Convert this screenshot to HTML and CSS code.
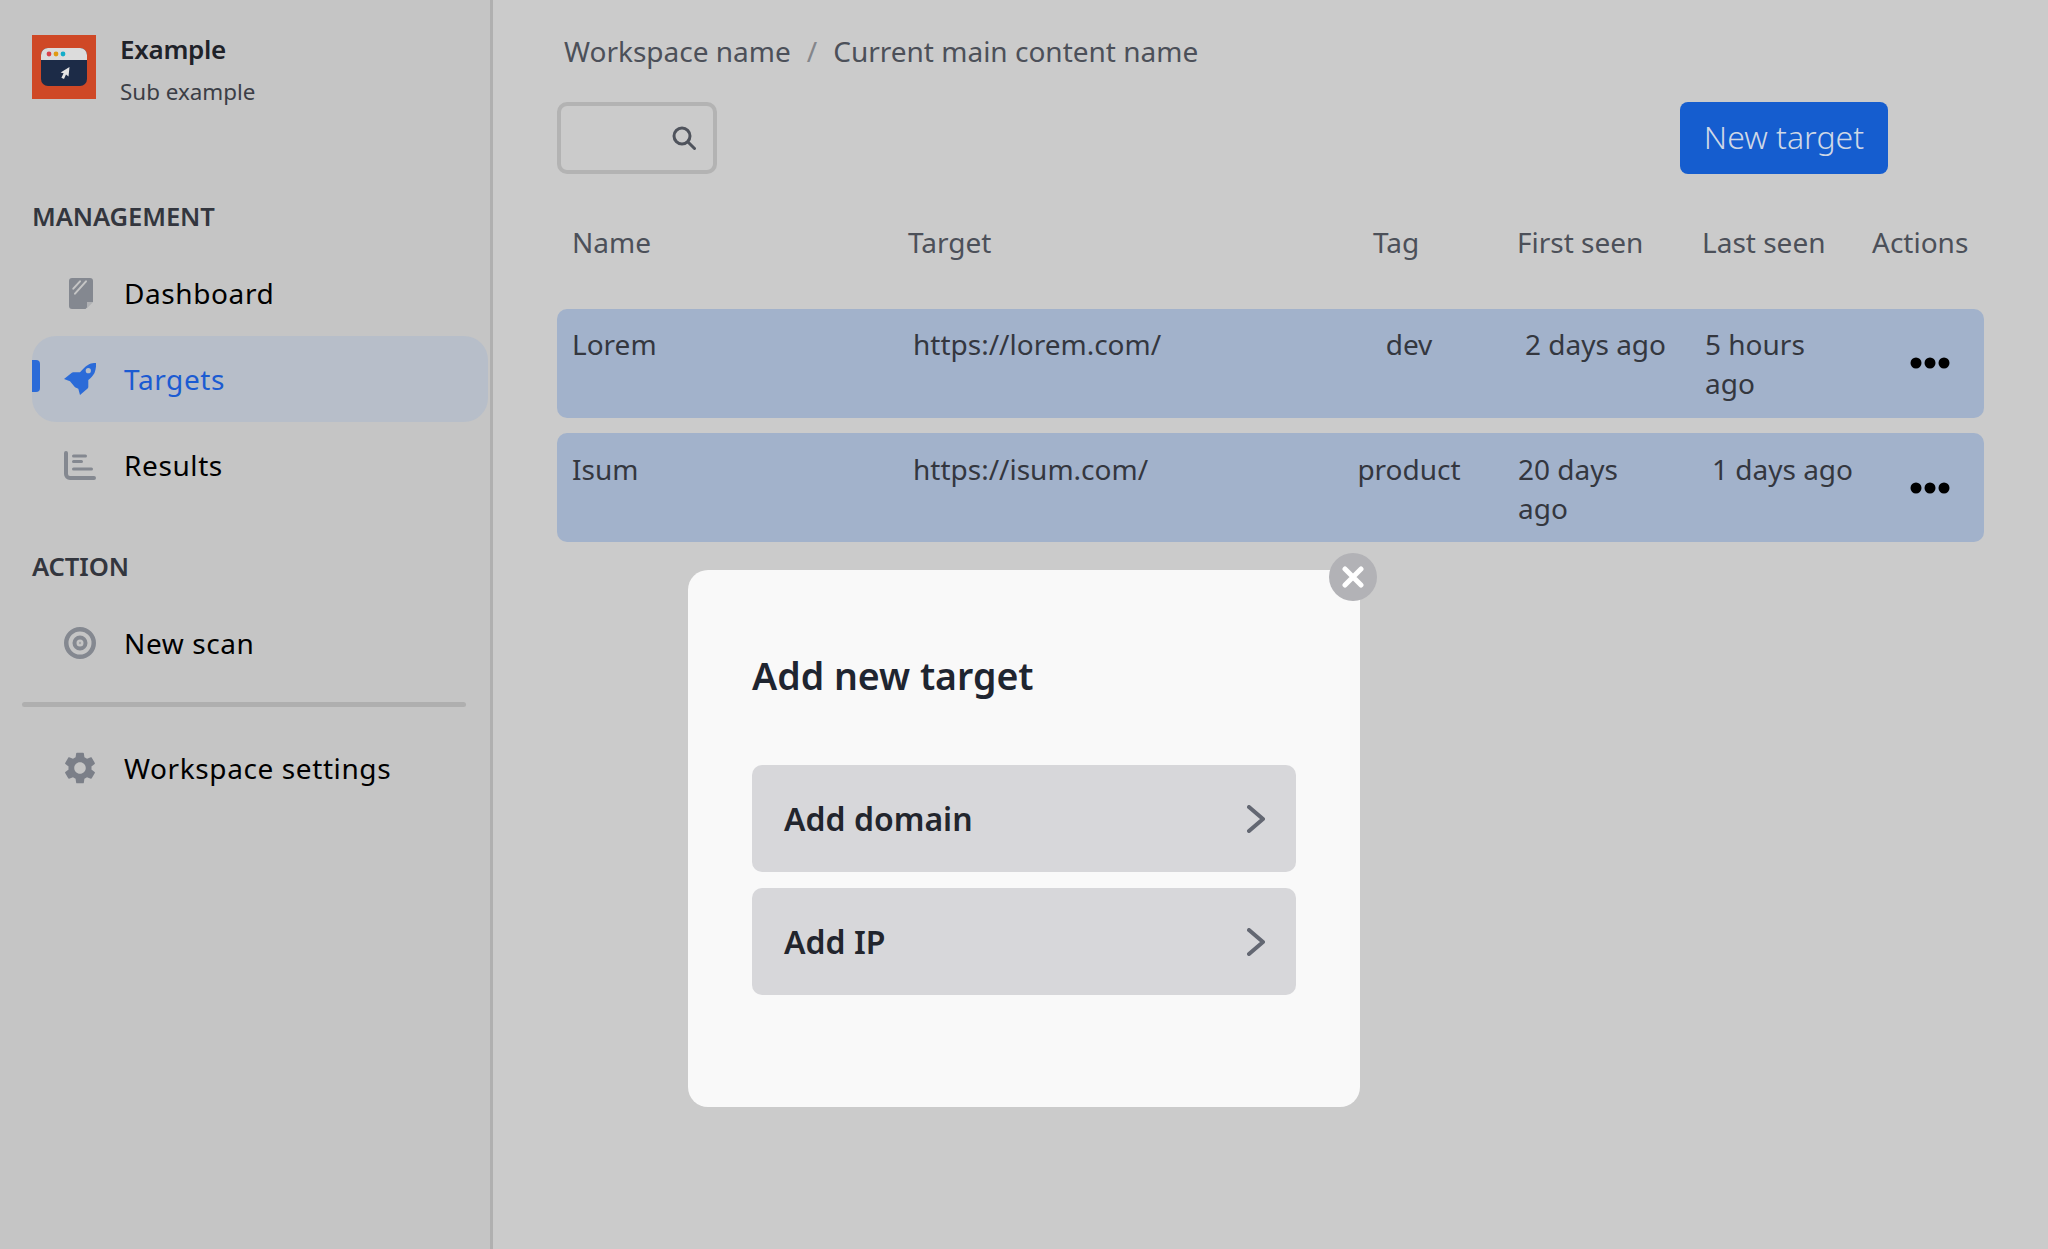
FILE: index.html

```html
<!DOCTYPE html>
<html>
<head>
  <title>Targets</title>
  <link rel="stylesheet" href="styles.css">
</head>
<body>

<div class="app">
  <div class="sidebar">
    <div class="brand">
      <svg class="logo" viewBox="0 0 64 64">
        <rect width="64" height="64" fill="#cf4826"/>
        <rect x="9" y="13" width="46" height="38" rx="7" fill="#1c2b47"/>
        <path d="M9 25v-5a7 7 0 0 1 7-7h32a7 7 0 0 1 7 7v5z" fill="#dcdcdc"/>
        <circle cx="17" cy="19" r="2.400" fill="#d8414a"/>
        <circle cx="24" cy="19" r="2.400" fill="#e09a13"/>
        <circle cx="31" cy="19" r="2.400" fill="#13adc9"/>
        <path d="M37.500 32l-1 9.500-2.500-2-2 4.500-2.600-1.300 2.200-4.400-3-.8z" fill="#e4e4e4"/>
      </svg>
      <div>
        <div class="brand-name">Example</div>
        <div class="brand-sub">Sub example</div>
      </div>
    </div>

    <div class="section-title first">MANAGEMENT</div>
    <div class="nav-item">
      <svg class="nav-icon" viewBox="0 0 32 32">
        <path d="M8 1h18a3 3 0 0 1 3 3v20.500L21.500 32H8a3 3 0 0 1-3-3V4a3 3 0 0 1 3-3z" fill="#848890"/>
        <path d="M23 31v-6h6z" fill="#b0b1b4"/>
        <path d="M9.300 11.700L16 4.300M11 16.700L22 4.300" stroke="#c5c5c5" stroke-width="2" stroke-linecap="round"/>
      </svg>
      <span>Dashboard</span>
    </div>
    <div class="nav-item active">
      <svg class="nav-icon" viewBox="0 0 32 32">
        <path d="M32 0c.3 3.500-.3 7-1.500 10-1.300 2.500-3.700 5-6.200 7v7c0 .8-.4 1.300-1 1.800L16 32l-1.700-6.300-3.300-1.400-5-6L0 16l7.500-6c.5-.4 1-.7 1.800-.7H16c2.500-2.800 5-5.800 8.300-7.600C26.500.5 29-.2 32 0z" fill="#2b6bd8"/>
        <circle cx="24.300" cy="7.700" r="2.600" fill="#b7bec9"/>
      </svg>
      <span>Targets</span>
    </div>
    <div class="nav-item">
      <svg class="nav-icon" viewBox="0 0 32 32">
        <path d="M2 4v21a4 4 0 0 0 4 4h24" fill="none" stroke="#848890" stroke-width="4" stroke-linecap="round"/>
        <path d="M9.500 7h12M9.500 12.500h8M9.500 20h18" fill="none" stroke="#848890" stroke-width="3" stroke-linecap="round"/>
      </svg>
      <span>Results</span>
    </div>

    <div class="section-title">ACTION</div>
    <div class="nav-item">
      <svg class="nav-icon" viewBox="0 0 32 32" fill="none" stroke="#848890">
        <circle cx="16" cy="16" r="13.750" stroke-width="4.500"/>
        <circle cx="16" cy="16" r="5.500" stroke-width="4"/>
        <circle cx="16" cy="16" r="1.200" fill="#a2a4a8" stroke="none"/>
      </svg>
      <span>New scan</span>
    </div>

    <div class="divider"></div>

    <div class="nav-item settings">
      <svg class="nav-icon" viewBox="2 2 20 20">
        <path fill="#7b7f88" d="M19.140 12.940c.04-.3.06-.61.06-.94 0-.32-.02-.64-.07-.94l2.030-1.580c.18-.14.23-.41.12-.61l-1.920-3.320c-.12-.22-.37-.29-.59-.22l-2.390.96c-.5-.38-1.030-.7-1.620-.94l-.36-2.540c-.04-.24-.24-.41-.48-.41h-3.840c-.24 0-.43.17-.47.41l-.36 2.540c-.59.24-1.130.57-1.620.94l-2.390-.96c-.22-.08-.47 0-.59.22L2.740 8.870c-.12.21-.08.47.12.61l2.030 1.580c-.05.3-.09.63-.09.94s.02.64.07.94l-2.030 1.580c-.18.14-.23.41-.12.61l1.920 3.320c.12.22.37.29.59.22l2.390-.96c.5.38 1.030.7 1.620.94l.36 2.540c.05.24.24.41.48.41h3.840c.24 0 .44-.17.47-.41l.36-2.540c.59-.24 1.130-.56 1.620-.94l2.390.96c.22.08.47 0 .59-.22l1.920-3.320c.12-.22.07-.47-.12-.61l-2.010-1.580zM12 15.600c-1.980 0-3.600-1.620-3.600-3.600s1.620-3.600 3.600-3.600 3.600 1.620 3.600 3.600-1.620 3.600-3.600 3.600z"/>
      </svg>
      <span>Workspace settings</span>
    </div>
  </div>

  <div class="main">
    <div class="breadcrumb">
      <span>Workspace name</span>
      <span class="sep">/</span>
      <span>Current main content name</span>
    </div>

    <div class="toolbar">
      <div class="search">
        <svg viewBox="0 0 24 24" fill="none" stroke="#4f535c" stroke-width="3">
          <circle cx="10" cy="10" r="8"/>
          <path d="M16 16l6.500 6.500" stroke-linecap="round"/>
        </svg>
      </div>
      <button class="btn-new">New target</button>
    </div>

    <div class="table-head">
      <div>Name</div>
      <div>Target</div>
      <div>Tag</div>
      <div>First seen</div>
      <div>Last seen</div>
      <div>Actions</div>
    </div>

    <div class="table-row">
      <div>Lorem</div>
      <div>https://lorem.com/</div>
      <div class="cell-center">dev</div>
      <div class="cell-first"><span>2 days ago</span></div>
      <div class="cell-last"><span>5 hours ago</span></div>
      <svg class="dots" viewBox="0 0 40 12"><circle cx="6" cy="6" r="5.500"/><circle cx="20" cy="6" r="5.500"/><circle cx="34" cy="6" r="5.500"/></svg>
    </div>
    <div class="table-row">
      <div>Isum</div>
      <div>https://isum.com/</div>
      <div class="cell-center">product</div>
      <div class="cell-first"><span>20 days ago</span></div>
      <div class="cell-last"><span>1 days ago</span></div>
      <svg class="dots" viewBox="0 0 40 12"><circle cx="6" cy="6" r="5.500"/><circle cx="20" cy="6" r="5.500"/><circle cx="34" cy="6" r="5.500"/></svg>
    </div>
  </div>
</div>

<div class="modal">
  <div class="modal-close">
    <svg viewBox="0 0 22 22"><path d="M3 3l16 16M19 3L3 19" stroke="#fff" stroke-width="5" stroke-linecap="round"/></svg>
  </div>
  <h2>Add new target</h2>
  <div class="option">
    <span>Add domain</span>
    <svg viewBox="0 0 18 28" fill="none" stroke="#636772" stroke-width="4" stroke-linecap="round" stroke-linejoin="round"><path d="M2 2l14 12L2 26"/></svg>
  </div>
  <div class="option">
    <span>Add IP</span>
    <svg viewBox="0 0 18 28" fill="none" stroke="#636772" stroke-width="4" stroke-linecap="round" stroke-linejoin="round"><path d="M2 2l14 12L2 26"/></svg>
  </div>
</div>

</body>
</html>
```

FILE: styles.css

```css
* { box-sizing: border-box; }
body { margin: 0; height: 1249px; overflow: hidden; font-family: "Noto Sans", sans-serif; background: #cbcbcb; }

.app { display: flex; height: 1249px; }

.sidebar { width: 493px; flex: none; padding-top: 34px; background: #c5c5c5; border-right: 3px solid #b0b0b0; }
.brand { display: flex; gap: 24px; margin-left: 32px; }
.logo { width: 64px; height: 64px; flex: none; margin-top: 1px; }
.brand-name { font-size: 26px; line-height: 30px; font-weight: 600; letter-spacing: -.3px; color: #1f2229; }
.brand-sub { margin-top: 13px; font-size: 22.4px; line-height: 30px; color: #3b3e46; }

.section-title { margin: 41px 0 15px 32px; font-size: 25.6px; line-height: 36px; font-weight: 600; letter-spacing: -.1px; color: #33363e; }
.section-title.first { margin-top: 92px; }

.nav-item { position: relative; display: flex; align-items: center; gap: 28px; height: 86px; width: 456px; margin-left: 32px; padding-left: 32px; font-size: 28px; letter-spacing: .6px; color: #000; }
.nav-icon { width: 32px; height: 32px; flex: none; }
.nav-item.active { background: #b7bec9; border-radius: 24px; color: #1b5bd2; }
.nav-item.active::before { content: ""; position: absolute; left: 0; top: 24px; width: 8px; height: 32px; background: #2b6bd8; border-radius: 0 4px 4px 0; }
.nav-item.settings { margin-top: 18px; }

.divider { height: 5px; width: 444px; margin: 16px 0 0 22px; background: #afafaf; border-radius: 3px; }

.main { flex: 1; padding: 29px 64px 0 64px; min-width: 0; }
.breadcrumb { display: flex; gap: 16px; padding-left: 7px; font-size: 28px; line-height: 44px; color: #4c5059; }
.sep { color: #84868b; }

.toolbar { display: flex; justify-content: space-between; margin-top: 29px; padding-right: 96px; }
.search { display: flex; align-items: center; justify-content: flex-end; width: 160px; height: 72px; padding-right: 17px; border: 4px solid #b3b3b3; border-radius: 10px; }
.search svg { width: 24px; height: 24px; }
.btn-new { width: 208px; height: 72px; padding: 0 0 4px; border: 0; border-radius: 8px; background: #155dcf; color: #cfd8e6; font-family: inherit; font-size: 32px; font-weight: 300; }

.table-head { display: grid; grid-template-columns: 336px 465px 144px 185px 170px 1fr; margin-top: 46px; padding-left: 15px; font-size: 28px; line-height: 44px; color: #4c5059; }

.table-row { display: grid; grid-template-columns: 341px 405px 182px 191px 185px 1fr; align-items: start; height: 109px; margin-bottom: 15px; padding: 16px 0 0 15px; background: #a2b2cb; border-radius: 10px; font-size: 28px; line-height: 39px; color: #34373f; }
.table-row:last-child { padding-top: 17px; }
.table-head + .table-row { margin-top: 45px; }
.cell-center { text-align: center; }
.cell-first { display: flex; justify-content: center; padding: 0 18px; }
.cell-last { display: flex; justify-content: center; padding: 0 16px 0 14px; }
.dots { width: 40px; height: 12px; margin: 32px 0 0 34px; fill: #000; }

.modal { position: absolute; left: 688px; top: 570px; width: 672px; height: 537px; padding: 64px; background: #f9f9f9; border-radius: 20px; }
.modal h2 { margin: 0 0 47px; font-size: 37.5px; line-height: 84px; font-weight: 600; color: #1f2530; }
.modal-close { position: absolute; top: -17px; right: -17px; display: flex; align-items: center; justify-content: center; width: 48px; height: 48px; background: #b2b2b6; border-radius: 50%; }
.modal-close svg { width: 22px; height: 22px; }
.option { display: flex; align-items: center; justify-content: space-between; height: 107px; margin-bottom: 16px; padding: 0 31px 0 32px; background: #d7d7da; border-radius: 10px; font-size: 32px; font-weight: 600; color: #22252d; }
.option svg { width: 18px; height: 28px; }
```
